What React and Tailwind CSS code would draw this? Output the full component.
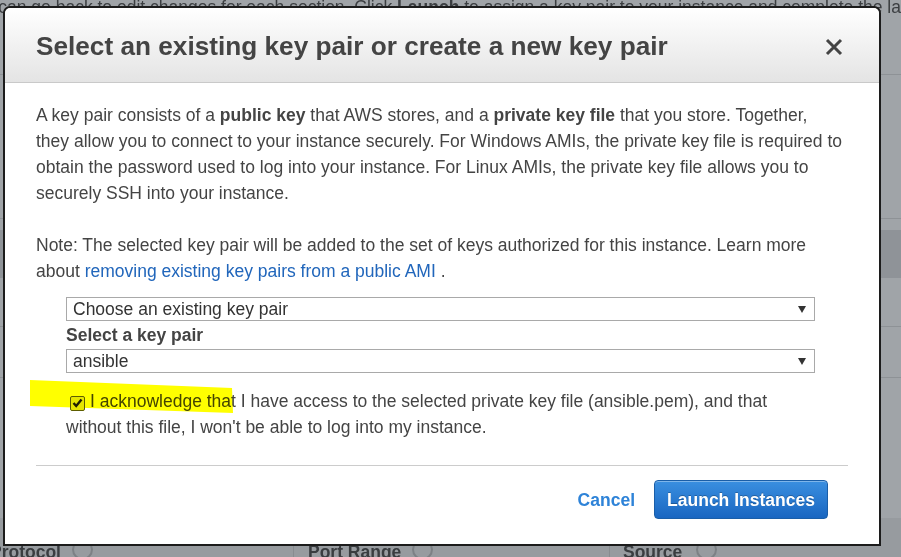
export default function App() {
  return (
    <div className="relative w-[901px] h-[557px] overflow-hidden bg-[#a0a4a8] font-['Liberation_Sans',Arial,sans-serif]">
      {/* page behind the overlay */}
      <div className="flex flex-col h-full">
        <div className="h-[75px] border-b border-[#8e9296] flex justify-end">
          <p className="-mt-[2px] shrink-0 whitespace-nowrap text-[17.5px] leading-[18px] text-[#3b3e41]">
            You can go back to edit changes for each section. Click <b>Launch</b> to assign a key pair to your instance and complete the la
          </p>
        </div>
        <div className="h-[144px] border-b border-[#8e9296]"></div>
        <div className="h-[11px]"></div>
        <div className="h-[48px] bg-[#8f9398]"></div>
        <div className="h-[49px] border-b border-[#8e9296]"></div>
        <div className="h-[51px] border-b border-[#8e9296]"></div>
        <div className="flex-1"></div>
        <div className="h-[39px] bg-[#979b9f] flex text-[17.5px] font-bold text-[#3a3d40]">
          <div className="w-[294px] border-r border-[#888c90] pt-[25px] flex items-start gap-[11px]">
            <span className="-ml-[10px] leading-[18px]">Protocol</span>
            <span className="-mt-[4px] w-[21px] h-[21px] rounded-full border-2 border-[#7d8185]"></span>
          </div>
          <div className="w-[316px] border-r border-[#888c90] pt-[25px] pl-[14px] flex items-start gap-[11px]">
            <span className="leading-[18px]">Port Range</span>
            <span className="-mt-[4px] w-[21px] h-[21px] rounded-full border-2 border-[#7d8185]"></span>
          </div>
          <div className="flex-1 pt-[25px] pl-[13px] flex items-start gap-[14px]">
            <span className="leading-[18px]">Source</span>
            <span className="-mt-[4px] w-[21px] h-[21px] rounded-full border-2 border-[#7d8185]"></span>
          </div>
        </div>
      </div>

      {/* modal */}
      <div className="absolute left-[3px] top-[6px] w-[878px] h-[540px] bg-white border-2 border-[#1c1c1c] rounded-t-[7px] flex flex-col">
        <div className="h-[75px] shrink-0 rounded-t-[6px] bg-gradient-to-b from-white to-[#e4e4e4] border-b border-[#c9c9c9] flex items-center justify-between pl-[31px] pr-[36px]">
          <h1 className="text-[26.2px] font-bold text-[#444] leading-[30px] pt-[1px]">
            Select an existing key pair or create a new key pair
          </h1>
          <svg width="18" height="18" viewBox="0 0 18 18" className="mt-[4px]">
            <path d="M2 2 L16 16 M16 2 L2 16" stroke="#444" strokeWidth="3" />
          </svg>
        </div>

        <div className="px-[31px] pt-[19px] text-[17.5px] leading-[26px] text-[#444]">
          <p className="whitespace-nowrap">
            A key pair consists of a <b>public key</b> that AWS stores, and a <b>private key file</b> that you store. Together,<br />
            they allow you to connect to your instance securely. For Windows AMIs, the private key file is required to<br />
            obtain the password used to log into your instance. For Linux AMIs, the private key file allows you to<br />
            securely SSH into your instance.
          </p>
          <p className="mt-[26px]">
            Note: The selected key pair will be added to the set of keys authorized for this instance. Learn more
            about <a className="text-[#2166bb]">removing existing key pairs from a public AMI</a> .
          </p>

          <div className="ml-[30px] w-[749px] mt-[13px] text-[#333]">
            <div className="h-[24px] border border-[#a9a9a9] flex items-center justify-between pl-[6px] pr-[8px] leading-[22px]">
              <span>Choose an existing key pair</span>
              <svg width="8" height="7" viewBox="0 0 8 7"><path d="M0 0 L8 0 L4 7 Z" fill="#333" /></svg>
            </div>
            <div className="h-[28px] leading-[28px] font-bold text-[#444]">Select a key pair</div>
            <div className="h-[24px] border border-[#a9a9a9] flex items-center justify-between pl-[6px] pr-[8px] leading-[22px]">
              <span>ansible</span>
              <svg width="8" height="7" viewBox="0 0 8 7"><path d="M0 0 L8 0 L4 7 Z" fill="#333" /></svg>
            </div>
          </div>

          <p className="ml-[30px] w-[749px] mt-[15px]">
            <span className="inline-flex items-center justify-center w-[15px] h-[15px] ml-[4px] mr-[5px] align-[-1px] border border-[#5d5d00] rounded-[2px] bg-[#e6e600]">
              <svg width="11" height="10" viewBox="0 0 11 10"><path d="M1.5 5 L4.2 8 L9.5 1.5" stroke="#1f1f1f" strokeWidth="2.4" fill="none" /></svg>
            </span>
            I acknowledge that I have access to the selected private key file (ansible.pem), and that without this file, I won't be able to log into my instance.
          </p>

          <div className="mt-[25px] border-t border-[#cccccc]"></div>

          <div className="mt-[14px] flex justify-end items-center gap-[19px] pr-[20px]">
            <a className="font-bold text-[#2e83d8]">Cancel</a>
            <button className="w-[174px] h-[39px] rounded-[4px] border border-[#1a5ea8] bg-gradient-to-b from-[#3a8fe0] to-[#1966c1] shadow-[inset_0_1px_0_rgba(255,255,255,0.35)] text-white font-bold text-[17.5px] [text-shadow:0_-1px_0_rgba(0,0,0,0.25)]">
              Launch Instances
            </button>
          </div>
        </div>
      </div>

      {/* yellow highlighter mark */}
      <svg className="absolute left-[28px] top-[378px] mix-blend-multiply pointer-events-none" width="208" height="38" viewBox="0 0 208 38">
        <polygon points="2,2 204,10 205,35 2,28" fill="#ffff00" />
      </svg>
    </div>
  );
}
